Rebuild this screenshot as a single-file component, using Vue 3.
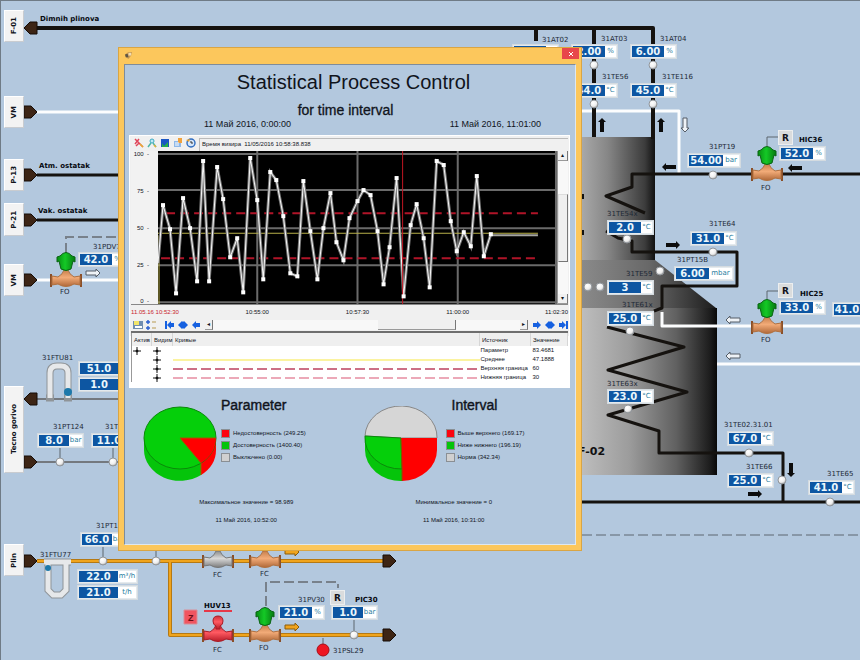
<script setup>
const sources = [
  { id: 's1', name: 'F-01', x: 4, y: 10, h: 32 },
  { id: 's2', name: 'VM', x: 4, y: 96, h: 32 },
  { id: 's3', name: 'P-13', x: 4, y: 159, h: 32 },
  { id: 's4', name: 'P-21', x: 4, y: 203, h: 33 },
  { id: 's5', name: 'VM', x: 4, y: 264, h: 32 },
  { id: 's6', name: 'Tecno gorivo', x: 4, y: 386, h: 87 },
  { id: 's7', name: 'Plin', x: 4, y: 544, h: 32 },
]

const heads = [
  { x: 24, y: 28, left: true },
  { x: 24, y: 112 },
  { x: 24, y: 175 },
  { x: 24, y: 220 },
  { x: 24, y: 280 },
  { x: 24, y: 399, left: true },
  { x: 24, y: 462 },
  { x: 24, y: 561 },
  { x: 383, y: 561 },
  { x: 383, y: 635 },
]

const readouts = [
  { v: '1.00', u: '%', x: 512, y: 44 },
  { v: '2.00', u: '%', x: 571, y: 44 },
  { v: '6.00', u: '%', x: 630, y: 44 },
  { v: '44.0', u: '°C', x: 571, y: 83 },
  { v: '45.0', u: '°C', x: 630, y: 83 },
  { v: '42.0', u: '%', x: 78, y: 252 },
  { v: '51.0', u: 'm³/h', x: 78, y: 361, w: 58, s: 38 },
  { v: '1.0', u: 't/h', x: 78, y: 377, w: 58, s: 38 },
  { v: '8.0', u: 'bar', x: 37, y: 433, s: 30 },
  { v: '11.0', u: '°C', x: 91, y: 433 },
  { v: '66.0', u: 'bar', x: 80, y: 532, s: 30 },
  { v: '22.0', u: 'm³/h', x: 77, y: 569, w: 61, s: 39 },
  { v: '21.0', u: 't/h', x: 77, y: 585, w: 61, s: 39 },
  { v: '21.0', u: '%', x: 278, y: 605 },
  { v: '1.0', u: 'bar', x: 331, y: 605, s: 30 },
  { v: '54.00', u: 'bar', x: 687, y: 153, w: 54, s: 34 },
  { v: '52.0', u: '%', x: 779, y: 146 },
  { v: '2.0', u: '°C', x: 607, y: 220 },
  { v: '31.0', u: '°C', x: 690, y: 231 },
  { v: '6.00', u: 'mbar', x: 674, y: 266, w: 60, s: 33 },
  { v: '3', u: '°C', x: 607, y: 280 },
  { v: '25.0', u: '°C', x: 607, y: 311 },
  { v: '33.0', u: '%', x: 779, y: 300 },
  { v: '41.0', x: 832, y: 302, w: 34, s: 26 },
  { v: '23.0', u: '°C', x: 607, y: 389 },
  { v: '67.0', u: '°C', x: 727, y: 431 },
  { v: '25.0', u: '°C', x: 727, y: 473 },
  { v: '41.0', u: '°C', x: 808, y: 480 },
]

const tags = [
  { t: '31AT02', x: 542, y: 42 },
  { t: '31AT03', x: 601, y: 41 },
  { t: '31AT04', x: 660, y: 41 },
  { t: '31TE56', x: 602, y: 79 },
  { t: '31TE116', x: 662, y: 79 },
  { t: '31PDV7', x: 93, y: 249 },
  { t: '31FTU81', x: 42, y: 360 },
  { t: '31PT124', x: 53, y: 429 },
  { t: '31T', x: 105, y: 429 },
  { t: '31PT1', x: 96, y: 528 },
  { t: '31FTU77', x: 40, y: 557 },
  { t: '31PV30', x: 298, y: 602 },
  { t: '31PSL29', x: 333, y: 653 },
  { t: '31PT19', x: 709, y: 149 },
  { t: '31TE64', x: 709, y: 226 },
  { t: '31TE54x', x: 607, y: 216 },
  { t: '31PT15B', x: 677, y: 262 },
  { t: '31TE59', x: 626, y: 276 },
  { t: '31TE61x', x: 622, y: 307 },
  { t: '31TE63x', x: 607, y: 386 },
  { t: '31TE02.31.01', x: 724, y: 427 },
  { t: '31TE66', x: 746, y: 469 },
  { t: '31TE65', x: 827, y: 476 },
  { t: 'FO', x: 60, y: 294 },
  { t: 'FC', x: 213, y: 577 },
  { t: 'FC', x: 260, y: 576 },
  { t: 'FC', x: 213, y: 652 },
  { t: 'FO', x: 259, y: 650 },
  { t: 'FO', x: 761, y: 190 },
  { t: 'FO', x: 761, y: 342 },
]

const boldTags = [
  { t: 'Dimnih plinova', x: 40, y: 21 },
  { t: 'Atm. ostatak', x: 39, y: 168 },
  { t: 'Vak. ostatak', x: 38, y: 213 },
  { t: 'HUV13', x: 204, y: 608 },
  { t: 'PIC30', x: 355, y: 602 },
  { t: 'HIC36', x: 799, y: 142 },
  { t: 'HIC25', x: 800, y: 296 },
]

const regulators = [
  { id: 'r1', x: 778, y: 130 },
  { id: 'r2', x: 778, y: 283 },
  { id: 'r3', x: 330, y: 590 },
]

const sensors = [
  [594, 65], [594, 104], [653, 65], [653, 104], [713, 175], [713, 252], [627, 239],
  [660, 271], [588, 287], [600, 287], [630, 331], [628, 409], [749, 453], [782, 480],
  [830, 502], [60, 462], [113, 462], [103, 561], [156, 561], [354, 635],
]

const valves = [
  { x: 66, y: 280, c: 'copper', head: true },
  { x: 767, y: 174, c: 'copper', head: true },
  { x: 767, y: 327, c: 'copper', head: true },
  { x: 265, y: 635, c: 'copper', head: true },
  { x: 265, y: 561, c: 'copper' },
  { x: 218, y: 561, c: 'steel' },
  { x: 218, y: 635, c: 'alarm' },
]

const arrows = [
  { x: 602, y: 125, a: -90, k: 'solid' },
  { x: 661, y: 125, a: -90, k: 'solid' },
  { x: 685, y: 125, a: 90, k: 'hollow' },
  { x: 669, y: 167, a: 180, k: 'solid' },
  { x: 795, y: 168, a: 180, k: 'solid' },
  { x: 673, y: 245, a: 0, k: 'solid' },
  { x: 733, y: 320, a: 180, k: 'hollow' },
  { x: 733, y: 356, a: 180, k: 'hollow' },
  { x: 755, y: 494, a: 0, k: 'solid' },
  { x: 791, y: 470, a: 90, k: 'solid' },
  { x: 93, y: 273, a: 0, k: 'hollow' },
  { x: 292, y: 552, a: 0, k: 'amber' },
  { x: 292, y: 627, a: 0, k: 'amber' },
]

const samples = [
  [0, 112], [5, 54], [12, 78], [18, 142], [25, 47], [32, 77], [39, 130], [45, 10], [51, 130],
  [59, 16], [65, 48], [72, 106], [79, 87], [85, 141], [92, 7], [99, 49], [105, 128], [112, 21],
  [118, 29], [125, 65], [132, 122], [139, 125], [145, 30], [152, 80], [159, 128], [165, 77],
  [172, 42], [178, 91], [185, 109], [191, 67], [199, 50], [205, 39], [212, 44], [219, 80],
  [225, 133], [231, 96], [238, 27], [245, 145], [252, 74], [258, 53], [265, 87], [271, 136],
  [278, 10], [285, 14], [292, 70], [298, 100], [305, 81], [312, 95], [318, 25], [325, 105], [332, 83],
]
const curve = samples.map((p) => p.join(',')).join(' ')
const yTicks = [100, 75, 50, 25, 0]
const xTicks = ['11.05.16 10:52:30', '10:55:00', '10:57:30', '11:00:00', '11:02:30']

const curves = [
  { active: true, kind: '', source: 'Параметр', value: '83.4681' },
  { kind: 'mean', source: 'Среднее', value: '47.1888' },
  { kind: 'upper', source: 'Верхняя граница', value: '60' },
  { kind: 'lower', source: 'Нижняя граница', value: '30' },
]

const parameterLegend = [
  { c: 'red', t: 'Недостоверность (249.25)' },
  { c: 'green', t: 'Достоверность (1400.40)' },
  { c: 'grey', t: 'Выключено (0.00)' },
]
const intervalLegend = [
  { c: 'red', t: 'Выше верхнего (169.17)' },
  { c: 'green', t: 'Ниже нижнего (196.19)' },
  { c: 'grey', t: 'Норма (342.34)' },
]

const at = (n) => ({ left: n.x + 'px', top: n.y + 'px' })
</script>

<template>
  <main class="plant">
    <svg class="drawing" aria-hidden="true">
      <defs>
        <linearGradient id="shellTop" x1="582" x2="656" y1="0" y2="0" gradientUnits="userSpaceOnUse">
          <stop offset="0" stop-color="#a8a8a8" /><stop offset=".35" stop-color="#868686" /><stop offset=".85" stop-color="#3c3c3c" /><stop offset="1" stop-color="#0c0c0c" />
        </linearGradient>
        <linearGradient id="shellMid" x1="582" x2="716" y1="0" y2="0" gradientUnits="userSpaceOnUse">
          <stop offset="0" stop-color="#8a8a8a" /><stop offset=".5" stop-color="#686868" /><stop offset="1" stop-color="#1c1c1c" />
        </linearGradient>
        <linearGradient id="shellLow" x1="582" x2="717" y1="0" y2="0" gradientUnits="userSpaceOnUse">
          <stop offset="0" stop-color="#bdbdbd" /><stop offset=".35" stop-color="#9c9c9c" /><stop offset=".7" stop-color="#606060" /><stop offset=".95" stop-color="#1c1c1c" /><stop offset="1" stop-color="#080808" />
        </linearGradient>
        <linearGradient id="copper" x1="0" x2="0" y1="0" y2="1">
          <stop offset="0" stop-color="#c77f4c" /><stop offset=".45" stop-color="#f2ab78" /><stop offset="1" stop-color="#b06838" />
        </linearGradient>
        <linearGradient id="steel" x1="0" x2="0" y1="0" y2="1">
          <stop offset="0" stop-color="#8c8c8c" /><stop offset=".45" stop-color="#d8d8d8" /><stop offset="1" stop-color="#7c7c7c" />
        </linearGradient>
        <linearGradient id="alarm" x1="0" x2="0" y1="0" y2="1">
          <stop offset="0" stop-color="#cf2f38" /><stop offset=".45" stop-color="#ff5a62" /><stop offset="1" stop-color="#b81c28" />
        </linearGradient>
        <linearGradient id="greenHead" x1="0" x2="1" y1="0" y2="0">
          <stop offset="0" stop-color="#078c12" /><stop offset=".45" stop-color="#14c926" /><stop offset="1" stop-color="#067a10" />
        </linearGradient>
        <radialGradient id="ball" cx=".4" cy=".35" r=".7">
          <stop offset="0" stop-color="#fff" /><stop offset=".6" stop-color="#eee" /><stop offset="1" stop-color="#999" />
        </radialGradient>
      </defs>

      <path class="shell-top" d="M582 137H655V260H582Z" />
      <path class="shell-mid" d="M582 260H655L716 308H582Z" />
      <path class="shell-low" d="M582 308H717V475H582Z" />

      <g class="pipe white">
        <path d="M37 112H119M582 111H679V174M37 280H119M662 312V326H860M717 364H860" />
      </g>
      <g class="pipe black">
        <path d="M37 28H653V139M594 28V137M536 28V41" class="thick" />
        <path d="M37 175H119M37 220H119" />
        <path d="M860 174H632V187L606 196L645 213" />
        <path d="M606 231L618 238L632 241V252H737V286H662V308L654 311" />
        <path d="M607 327L684 347L608 370L687 392L608 415L659 431V453H783V501M582 502H860" />
      </g>
      <path class="mark" d="M582 194h2v5h-2zM582 230h2v5h-2z" />
      <path class="pipe grey" d="M37 399H119M37 462H119" />
      <path class="stem" d="M60 447V460M113 447V460M103 547V558M156 551V558M354 620V633M323 638V646M767 146V137H778M767 299V291H778" />
      <g class="pipe amber-edge"><path d="M37 561H384M170 561V635H384" /></g>
      <g class="pipe amber-pipe"><path d="M37 561H384M170 561V635H384" /></g>

      <path class="dash" d="M66 253V237H119M266 606V582H338V588" />
      <path class="dash long" d="M582 535H860" />

      <g v-for="(h, i) in heads" :key="'h' + i" :transform="`translate(${h.x} ${h.y})`">
        <path v-if="h.left" class="head" d="M0 0L6 -6H13V6H6Z" />
        <path v-else class="head" d="M0 -6H7L13 0L7 6H0Z" />
      </g>

      <g class="tube">
        <path class="tube-edge" d="M50 398V373Q50 366 57 366H61Q68 366 68 373V398M46 398H54M64 398H72" />
        <path class="tube-core" d="M50 398V373Q50 366 57 366H61Q68 366 68 373V398" />
        <path class="tube-edge" d="M48 564V590L53 595H61L66 590V564M44 562H71" />
        <path class="tube-core" d="M48 564V590L53 595H61L66 590V564M44 562H71" />
        <circle cx="68" cy="392" r="4" /><circle cx="48" cy="568" r="3" />
      </g>

      <g v-for="(v, i) in valves" :key="'v' + i" :transform="`translate(${v.x} ${v.y})`">
        <path class="flange" d="M-15 -6V7M15 -6V7" />
        <path :class="v.c" d="M-14 -4L-8 -3Q-3 -6 -2 -10H2Q3 -6 8 -3L14 -4V5L8 4Q0 9 -8 4L-14 5Z" />
        <g v-if="v.head">
          <path class="green" d="M-6 -24Q0 -31 6 -24L9 -23V-18L7 -19L5 -11Q0 -8 -5 -11L-7 -19L-9 -18V-23Z" />
        </g>
        <path v-if="v.c === 'alarm'" class="alarm" d="M-5 -14Q-5 -19 0 -19Q5 -19 5 -14Q5 -10 2 -9V-6H-2V-9Q-5 -10 -5 -14Z" />
      </g>

      <path v-for="(a, i) in arrows" :key="'a' + i" :class="'arrow-' + a.k" :transform="`translate(${a.x} ${a.y}) rotate(${a.a})`" d="M-7 -2H3V-4L7 0L3 4V2H-7Z" />
      <circle v-for="(s, i) in sensors" :key="'c' + i" class="sensor" :cx="s[0]" :cy="s[1]" r="4" />
      <circle class="switch" cx="323" cy="650" r="6" />

      <path class="trip" d="M184 610h13v14h-13z" />
      <path class="underline" d="M204 611h28" />
      <text class="trip-text" x="188" y="621">Z</text>
      <text class="unit-name" x="578" y="455">F-02</text>
      <text v-for="(t, i) in tags" :key="'t' + i" class="tag" :x="t.x" :y="t.y">{{ t.t }}</text>
      <text v-for="(t, i) in boldTags" :key="'b' + i" class="tag bold" :x="t.x" :y="t.y">{{ t.t }}</text>
    </svg>

    <button v-for="s in sources" :key="s.id" class="source" type="button" :style="{ ...at(s), height: s.h + 'px' }">
      <span>{{ s.name }}</span>
    </button>
    <div v-for="(r, i) in readouts" :key="i" class="readout" :style="{ ...at(r), width: (r.w || 47) + 'px' }">
      <b :style="{ width: (r.s || 32) + 'px' }">{{ r.v }}</b><i v-if="r.u">{{ r.u }}</i>
    </div>
    <button v-for="r in regulators" :key="r.id" class="regulator" type="button" :style="at(r)">R</button>

    <section class="window" role="dialog" aria-labelledby="spc-title">
      <header class="titlebar">
        <svg class="app-icon" viewBox="0 0 10 10"><path d="M2 3L5 1L9 1L8 5L5 9L2 7Z" fill="#c99b52" /><path d="M1 4L4 3L5 7L2 7Z" fill="#5f5545" /><path d="M5 2h3v3h-3z" fill="#f0dcb4" /></svg>
        <button class="close" type="button" aria-label="Close">
          <svg viewBox="0 0 6 6"><path d="M1 1L5 5M5 1L1 5" /></svg>
        </button>
      </header>

      <div class="body">
        <h1 id="spc-title">Statistical Process Control</h1>
        <h2>for time interval</h2>
        <div class="dates"><time>11 Май 2016, 0:00:00</time><time>11 Май 2016, 11:01:00</time></div>

        <div class="trend">
          <div class="tools">
            <button type="button" aria-label="Zoom out"><svg viewBox="0 0 10 10"><path d="M1 1L9 9M1 6L5 1M5 5l-3 3" stroke="#e0455a" stroke-width="1.5" fill="none" /><path d="M6 6l3 3" stroke="#e8b030" stroke-width="1.5" /></svg></button>
            <button type="button" aria-label="Zoom in"><svg viewBox="0 0 10 10"><circle cx="5" cy="3" r="2" fill="#bfe8f4" stroke="#3aa9c4" /><path d="M4 5L1 9M6 5L9 9" stroke="#4fb6a8" stroke-width="1.5" /><path d="M7 7l2 2" stroke="#e8b030" stroke-width="1.5" /></svg></button>
            <button type="button" aria-label="Visible curves"><svg viewBox="0 0 10 10"><path d="M1 1h8v8H1z" fill="#1b56c4" /><path d="M2 5l2 3 4-4v5H2z" fill="#26b04a" /></svg></button>
            <button type="button" aria-label="Properties"><svg viewBox="0 0 10 10"><path d="M1 3h7v6H1z" fill="#8fb8e8" /><path d="M5 0h4v5H5z" fill="#f0a23c" /><path d="M2 5h4M2 7h4" stroke="#fff" /></svg></button>
            <button type="button" aria-label="Time"><svg viewBox="0 0 10 10"><circle cx="5" cy="5" r="4" fill="#d5e6fa" stroke="#2e6cc0" stroke-width="1.4" /><path d="M5 3v2h2" stroke="#333" fill="none" /><path d="M0 2l4-1-1 3z" fill="#e8a12c" /></svg></button>
            <output>Время визира&nbsp; 11/05/2016 10:58:38.838</output>
          </div>

          <div class="plot">
            <div class="y-axis"><span v-for="t in yTicks" :key="t">{{ t }}&nbsp; -</span></div>
            <svg class="chart" viewBox="0 0 398 153" role="img" aria-label="Trend">
              <path d="M0 0H398V153H0Z" fill="#000" />
              <path class="grid" d="M0 3H398M0 39H398M0 77H398M0 114H398M0 151H398M99 0V153M199 0V153M299 0V153M397 0V153" />
              <path class="limit" d="M8 62H379M3 107H379" />
              <path class="tail" d="M332 84H379" />
              <path class="mean" d="M0 82H379" />
              <path class="mean" d="M1 84V153" />
              <polyline class="curve-shade" :points="curve" />
              <polyline class="curve" :points="curve" />
              <path class="cursor" d="M244 0V153" />
              <rect v-for="(p, i) in samples.slice(1)" :key="i" :x="p[0] - 2" :y="p[1] - 2" width="4" height="4" fill="#fff" />
            </svg>
            <div class="vscroll"><i class="arrow">▴</i><i class="thumb"></i><i class="arrow">▾</i></div>
          </div>
          <div class="x-axis"><span v-for="t in xTicks" :key="t">{{ t }}</span></div>

          <div class="nav">
            <button type="button" aria-label="Save"><svg viewBox="0 0 10 10"><path d="M0 1h10v8H0z" fill="#718db0" /><path d="M1 1h5v4H1z" fill="#f2e56a" /><path d="M2 6h7v2H2z" fill="#fff" /></svg></button>
            <button type="button" aria-label="Legend"><svg viewBox="0 0 10 10"><path d="M2 0v4M0 2h4M2 6v4M0 8h4" stroke="#2b5fd0" stroke-width="1.4" /><path d="M6 2h4M6 8h4" stroke="#b89a50" /></svg></button>
            <button type="button" aria-label="To start" class="first"><svg viewBox="0 0 10 10"><path d="M0 1h2v8H0zM2 5l4-4v2h3v4H6v2z" fill="#1560e0" /></svg></button>
            <button type="button" aria-label="Page back"><svg viewBox="0 0 10 10"><path d="M0 5l4-4 1 1 1-1 4 4-4 4-1-1-1 1z" fill="#1560e0" /></svg></button>
            <button type="button" aria-label="Step back"><svg viewBox="0 0 10 10"><path d="M1 5l4-4v2h4v4H5v2z" fill="#1560e0" /></svg></button>
            <div class="hscroll"><i>◂</i><i class="thumb"></i><i class="end">▸</i></div>
            <button type="button" aria-label="Step forward"><svg viewBox="0 0 10 10"><path d="M9 5l-4-4v2H1v4h4v2z" fill="#1560e0" /></svg></button>
            <button type="button" aria-label="Page forward"><svg viewBox="0 0 10 10"><path d="M0 5l4-4 1 1 1-1 4 4-4 4-1-1-1 1z" fill="#1560e0" /></svg></button>
            <button type="button" aria-label="To end"><svg viewBox="0 0 10 10"><path d="M10 1H8v8h2zM8 5L4 1v2H1v4h3v2z" fill="#1560e0" /></svg></button>
          </div>

          <table>
            <thead>
              <tr><th class="c-act">Актив</th><th class="c-vis">Видим</th><th>Кривые</th><th class="c-src">Источник</th><th class="c-val">Значение</th></tr>
            </thead>
            <tbody>
              <tr v-for="c in curves" :key="c.source">
                <td><svg v-if="c.active" class="plus" viewBox="0 0 8 8"><path d="M4 0V8M0 4H8" /><circle cx="4" cy="4" r="1" /></svg></td>
                <td><svg class="plus" viewBox="0 0 8 8"><path d="M4 0V8M0 4H8" /><circle cx="4" cy="4" r="1" /></svg></td>
                <td><div v-if="c.kind" :class="['sample', c.kind]"></div></td>
                <td>{{ c.source }}</td>
                <td>{{ c.value }}</td>
              </tr>
            </tbody>
          </table>
        </div>

        <div class="stats">
          <article class="stat">
            <div class="row">
              <svg class="pie" viewBox="0 0 74 76">
                <path d="M1 32V44A36 31 0 0 0 58 69V57Z" fill="#05c40a" />
                <path d="M58 57V69A36 31 0 0 0 73 44V32Z" fill="#f00" />
                <ellipse cx="37" cy="32" rx="36" ry="31" fill="#05cf0a" stroke="#0a8a0a" stroke-width="1" />
                <path d="M37 32L58 57A36 31 0 0 0 73 32Z" fill="#f00" />
                <path d="M73 32H37L58 57V69" fill="none" stroke="#a05a00" />
              </svg>
              <div class="info">
                <h3>Parameter</h3>
                <ul><li v-for="l in parameterLegend" :key="l.t"><i :class="l.c"></i>{{ l.t }}</li></ul>
              </div>
            </div>
            <p>Максимальное значение = 98.989</p>
            <p><time>11 Май 2016, 10:52:00</time></p>
          </article>
          <article class="stat interval">
            <div class="row">
              <svg class="pie" viewBox="0 0 74 76">
                <path d="M1 32V44A36 31 0 0 0 38 75V63Z" fill="#05c40a" />
                <path d="M38 63V75A36 31 0 0 0 73 44V32Z" fill="#f00" />
                <path d="M1 30A36 31 0 0 1 73 32L37 32Z" fill="#d6d6d6" stroke="#888" />
                <path d="M1 30L37 32L38 63A36 31 0 0 1 1 30Z" fill="#05cf0a" stroke="#0a8a0a" />
                <path d="M37 32H73A36 31 0 0 1 38 63Z" fill="#f00" />
                <path d="M37 32L38 63V75" fill="none" stroke="#7c5a00" />
              </svg>
              <div class="info">
                <h3>Interval</h3>
                <ul><li v-for="l in intervalLegend" :key="l.t"><i :class="l.c"></i>{{ l.t }}</li></ul>
              </div>
            </div>
            <p>Минимальное значение = 0</p>
            <p><time>11 Май 2016, 10:31:00</time></p>
          </article>
        </div>
      </div>
    </section>
  </main>
</template>

<style>
body { background: #b3c8de; }
</style>

<style scoped>
* { box-sizing: border-box; }
.plant {
  position: relative;
  min-height: 100vh;
  overflow: hidden;
  background: #b3c8de;
  box-shadow: inset 1px 1px #6f7b86;
  font-family: "Liberation Sans", Arial, sans-serif;
  color: #10141c;
}
.drawing { position: absolute; inset: 0; width: 100%; height: 100%; }
button { padding: 0; border: 0; background: none; font: inherit; color: inherit; }

.shell-top { fill: url(#shellTop); }
.shell-mid { fill: url(#shellMid); }
.shell-low { fill: url(#shellLow); }
.pipe { fill: none; stroke-width: 3; stroke-linejoin: round; }
.white { stroke: #fcfdfe; }
.black { stroke: #15120f; }
.thick { stroke-width: 4; }
.grey { stroke: #74797f; stroke-width: 2; }
.amber-edge { stroke: #b57913; stroke-width: 4; }
.amber-pipe { stroke: #f0a41c; stroke-width: 2; }
.stem { fill: none; stroke: #5d666f; }
.mark { fill: #111; }
.dash { fill: none; stroke: #78818b; stroke-width: 2; stroke-dasharray: 10 4; }
.dash.long { stroke: #5c6670; stroke-width: 1; }
.head { fill: #3d2515; stroke: #170d07; }
.tube-edge { fill: none; stroke: #8f9498; stroke-width: 7; }
.tube-core { fill: none; stroke: #e6e8ea; stroke-width: 5; }
.tube circle { fill: #1c78aa; }
.flange { stroke: #8a4f28; stroke-width: 2; }
.copper { fill: url(#copper); stroke: #b0703f; stroke-width: 1; }
.steel { fill: url(#steel); stroke: #777; }
.alarm { fill: url(#alarm); stroke: #a81c26; }
.green { fill: url(#greenHead); stroke: #0a6414; }
.arrow-solid { fill: #0c0c0c; }
.arrow-hollow { fill: #eef2f6; stroke: #555d66; }
.arrow-amber { fill: #efa31d; stroke: #8a5c0c; }
.sensor { fill: url(#ball); stroke: #92979c; }
.switch { fill: #ee1622; stroke: #a80d16; }
.trip { fill: #f05560; stroke: #d98f98; }
.underline { stroke: #e63848; stroke-width: 2; }
.trip-text { font: bold 9px "Liberation Sans", sans-serif; fill: #6b0c14; }
.unit-name { font: bold 11px "DejaVu Sans", sans-serif; fill: #111; }
.tag { font: 7px "DejaVu Sans", sans-serif; fill: #1d2836; }
.tag.bold { font-weight: bold; fill: #060a10; }

.source {
  position: absolute;
  width: 20px;
  display: flex;
  align-items: center;
  justify-content: center;
  background: #f3f3f3;
  border: 1px solid #fff;
  border-right-color: #c9ccd0;
  border-bottom-color: #c9ccd0;
}
.source span {
  writing-mode: vertical-rl;
  transform: rotate(180deg);
  font: bold 7px "DejaVu Sans", sans-serif;
  white-space: nowrap;
}
.readout {
  position: absolute;
  display: flex;
  height: 15px;
  padding: 1px;
  background: #e4eaee;
  border: 1px solid #d4dbe0;
  line-height: 11px;
  font-family: "DejaVu Sans", sans-serif;
}
.readout b {
  flex: none;
  background: #0d56a2;
  color: #eaf6fc;
  font-size: 10px;
  text-align: center;
}
.readout i {
  flex: 1;
  background: #fff;
  color: #267c9e;
  font-size: 7px;
  font-style: normal;
  text-align: center;
  white-space: nowrap;
}
.regulator {
  position: absolute;
  width: 15px;
  height: 15px;
  background: #dadcdd;
  border: 1px solid #eceeef;
  font: bold 9px "DejaVu Sans", sans-serif;
}

.window {
  position: absolute;
  left: 118px;
  top: 47px;
  width: 464px;
  padding: 0 5px 5px;
  background: #fcc75c;
  border: 1px solid #d9a544;
}
.titlebar { display: flex; justify-content: space-between; height: 16px; }
.app-icon { width: 9px; height: 9px; margin-top: 3px; }
.close {
  display: flex;
  align-items: center;
  justify-content: center;
  width: 17px;
  height: 11px;
  margin-right: -3px;
  background: #e8474b;
}
.close svg { width: 6px; height: 6px; stroke: #fff; }
.body { background: #b3c8de; border: 1px solid #7f8c9a; border-right-color: #dfe8f0; border-bottom-color: #dfe8f0; padding: 5px 5px 19px 4px; }
h1, h2, h3, p, ul { margin: 0; padding: 0; font-weight: normal; }
h1 { padding-left: 8px; font-size: 20px; line-height: 24px; text-align: center; }
h2 { margin-top: 9px; padding-right: 8px; font-size: 14px; line-height: 15px; text-align: center; -webkit-text-stroke: 0.3px #10141c; }
.dates { display: flex; justify-content: space-between; padding: 0 29px 0 75px; font-size: 9px; line-height: 12px; }

.trend {
  margin-top: 5px;
  padding: 2px 1px 5px;
  background: linear-gradient(#f0f0f0 0 200px, #fff 200px);
  border: 1px solid #fff;
  font-size: 6px;
}
.tools { display: flex; gap: 3px; height: 13px; padding-left: 3px; }
.tools button, .nav button { width: 10px; height: 10px; display: flex; flex: none; }
.tools svg, .nav svg { width: 10px; height: 10px; }
.tools output { flex: 1; padding-left: 2px; border-top: 1px solid #bbb; border-left: 1px solid #bbb; line-height: 11px; }
.plot { display: grid; grid-template-columns: 27px 1fr 11px; }
.y-axis { display: flex; flex-direction: column; justify-content: space-between; align-items: flex-end; padding-right: 9px; line-height: 6px; background: #f2f2f2; }
.chart { display: block; width: 100%; height: auto; }
.grid { stroke: #6a6a6a; stroke-width: 2; fill: none; }
.limit { stroke: #b01428; stroke-width: 2; stroke-dasharray: 9 5; }
.mean { stroke: #b9b04a; stroke-width: 1; fill: none; }
.tail { stroke: #a5a5a0; stroke-width: 2; }
.curve-shade { fill: none; stroke: #777; stroke-width: 3; }
.curve { fill: none; stroke: #f6f6f6; stroke-width: 1; }
.cursor { stroke: #c01622; stroke-width: 1; }
.vscroll { display: flex; flex-direction: column; background: #f8f8f8; border-left: 1px solid #999; }
.vscroll i, .hscroll i { font-style: normal; line-height: 9px; text-align: center; }
.vscroll .arrow { height: 10px; background: #f0f0f0; border-bottom: 1px solid #999; border-right: 1px solid #777; }
.vscroll .thumb { height: 68px; margin: auto 0; background: #efefef; border: 1px solid #ddd; border-right-color: #777; border-bottom-color: #777; }
.x-axis { display: grid; grid-template-columns: 76fr 100fr 100fr 100fr 60fr; height: 15px; border-top: 1px solid #888; line-height: 15px; text-align: center; background: #f0f0f0; }
.x-axis span:first-child { color: #c8202c; text-align: left; }
.x-axis span:last-child { text-align: right; }
.nav { display: flex; align-items: center; gap: 3px; height: 12px; padding-left: 2px; background: #f0f0f0; }
.nav .first { margin-left: 6px; }
.hscroll { display: flex; flex: 1; height: 10px; background: #f8f8f8; margin: 0 1px; }
.hscroll i { width: 8px; border-right: 1px solid #777; border-bottom: 1px solid #999; background: #f0f0f0; }
.hscroll .thumb { width: 78px; margin-left: auto; }
.hscroll .end { margin-left: 64px; }

table { width: 100%; table-layout: fixed; border-collapse: collapse; border-top: 2px solid #6e6e6e; border-left: 1px solid #999; background: #fff; }
thead { background: #efefef; }
th { height: 14px; padding: 0 0 0 2px; font-weight: normal; text-align: left; white-space: nowrap; border-right: 1px solid #d6d6d6; line-height: 8px; }
td { height: 9px; padding: 0; line-height: 9px; white-space: nowrap; }
td:nth-child(1), td:nth-child(2), td:nth-child(4) { padding-left: 1px; }
td:nth-child(5) { padding-left: 2px; }
.c-act { width: 20px; }
.c-vis { width: 21px; }
.c-src { width: 51px; }
.c-val { width: 37px; }
.plus { display: block; width: 8px; height: 8px; stroke: #111; fill: #111; }
.sample { height: 2px; }
.sample.mean { background: #fbf3a0; }
.sample.upper { background: repeating-linear-gradient(90deg, #cc6f86 0 10px, #fff 10px 14px); }
.sample.lower { background: repeating-linear-gradient(90deg, #eca9b8 0 10px, #fff 10px 14px); }

.stats { display: grid; grid-template-columns: 1fr 1fr; }
.stat { padding-left: 14px; }
.row { display: flex; gap: 4px; height: 109px; padding-top: 9px; }
.interval .row { gap: 8px; }
.pie { width: 74px; height: 76px; margin-top: 9px; flex: none; }
h3 { font-size: 14px; line-height: 16px; -webkit-text-stroke: 0.4px #10141c; }
.interval h3 { padding-left: 6px; }
ul { list-style: none; margin-top: 14px; font-size: 6px; }
li { display: flex; align-items: center; gap: 3px; height: 12px; white-space: nowrap; }
li i { width: 9px; height: 9px; border: 1px solid #8a8f94; }
li .red { background: #fb0410; }
li .green { background: #05c40a; }
li .grey { background: #d0d0d0; }
.stat p { font-size: 6px; line-height: 10px; text-align: center; margin-bottom: 8px; }
.stat p:last-child { margin-bottom: 0; }
.interval p { padding-right: 26px; }
</style>
